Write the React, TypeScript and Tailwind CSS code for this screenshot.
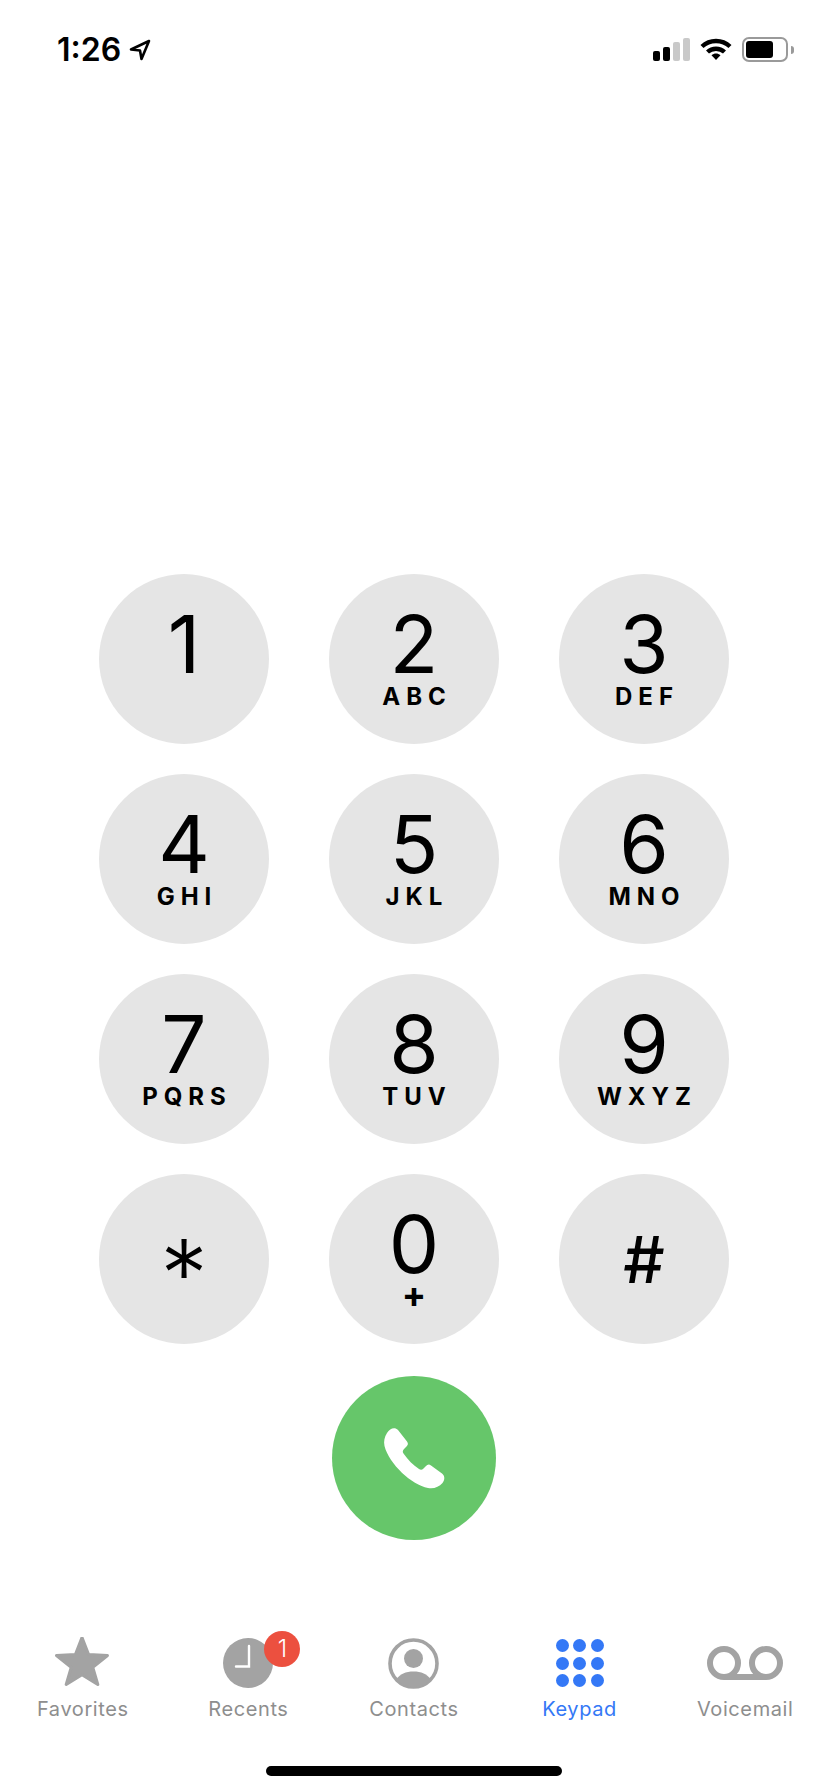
const KEYS = [
  { digit: "1", letters: "" },
  { digit: "2", letters: "ABC" },
  { digit: "3", letters: "DEF" },
  { digit: "4", letters: "GHI" },
  { digit: "5", letters: "JKL" },
  { digit: "6", letters: "MNO" },
  { digit: "7", letters: "PQRS" },
  { digit: "8", letters: "TUV" },
  { digit: "9", letters: "WXYZ" },
];

function StatusBar() {
  return (
    <div className="flex h-[86px] shrink-0 items-start justify-between pl-[57px] pr-[34px] pt-[32px]">
      <div className="flex items-center gap-[8px]">
        <span className="text-[32px] font-semibold leading-[36px] text-black">1:26</span>
        <svg width="22" height="22" viewBox="0 0 22 22" fill="none">
          <path d="M20 2 2 10.5 11 11.5 12.5 20z" stroke="#000" strokeWidth="2.6" strokeLinejoin="round" />
        </svg>
      </div>
      <div className="flex items-center gap-[10px] pt-[5px]">
        <div className="flex items-end gap-[3px]">
          <div className="h-[10px] w-[7px] rounded-[2px] bg-black" />
          <div className="h-[14px] w-[7px] rounded-[2px] bg-black" />
          <div className="h-[19px] w-[7px] rounded-[2px] bg-[#c9c9c9]" />
          <div className="h-[23px] w-[7px] rounded-[2px] bg-[#c9c9c9]" />
        </div>
        <svg width="32" height="23" viewBox="0 0 32 23" fill="none">
          <path d="M2 8.5C9.8 1.2 22.2 1.2 30 8.5" stroke="#000" strokeWidth="4.4" />
          <path d="M7.5 14C12.2 9.7 19.8 9.7 24.5 14" stroke="#000" strokeWidth="4.4" />
          <path d="M11.5 17.2C14.2 15 17.8 15 20.5 17.2L16 22z" fill="#000" />
        </svg>
        <div className="flex items-center gap-[3px]">
          <div className="flex h-[25px] w-[46px] items-center rounded-[7px] border-2 border-[#9a9a9a] p-[2px]">
            <div className="h-full w-[27px] rounded-[3px] bg-black" />
          </div>
          <div className="h-[8px] w-[3px] rounded-r-full bg-[#9a9a9a]" />
        </div>
      </div>
    </div>
  );
}

function Key({ digit, letters }: { digit: string; letters: string }) {
  return (
    <button className="flex h-[170px] w-[170px] flex-col items-center rounded-full bg-[#e5e5e5] pt-[41px] text-black">
      <span className="text-[80px] font-normal leading-[58px]">{digit}</span>
      <span className="mt-[12px] h-[24px] pl-[6px] text-[24px] font-bold leading-[24px] tracking-[6px]">{letters}</span>
    </button>
  );
}

function Keypad() {
  return (
    <div className="grid w-fit grid-cols-3 gap-x-[60px] gap-y-[30px]">
      {KEYS.map((k) => (
        <Key key={k.digit} digit={k.digit} letters={k.letters} />
      ))}
      <button className="flex h-[170px] w-[170px] items-center justify-center rounded-full bg-[#e5e5e5] pt-[28px] text-[95px] font-[350] leading-none text-black">
        *
      </button>
      <button className="flex h-[170px] w-[170px] flex-col items-center rounded-full bg-[#e5e5e5] pt-[41px] text-black">
        <span className="text-[80px] font-normal leading-[58px]">0</span>
        <span className="mt-[9px] text-[36px] font-bold leading-[24px]">+</span>
      </button>
      <button className="flex h-[170px] w-[170px] items-center justify-center rounded-full bg-[#e5e5e5] text-[65px] font-medium leading-none text-black">
        #
      </button>
    </div>
  );
}

function CallButton() {
  return (
    <button className="mt-[32px] flex h-[164px] w-[164px] items-center justify-center rounded-full bg-[#66c66a]">
      <svg width="62" height="62" viewBox="-1 -1 62 62" fill="#fff">
        <path d="M3 5C6 0 11-1 14 2L23 13.5C24.5 15.5 24 17 22.5 18.5L20 21C18.5 22.5 18.5 24 19.5 25.5 24 32 29 37 35 41 36.5 42 38 42 39.5 40.5L42 38C43.5 36.5 45 36 47 37.5L58 45.5C61 48 61 52 58.5 55 55 59 50 61 44 60 28 57 5 36 .5 18-.5 13 .5 9 3 5Z" />
      </svg>
    </button>
  );
}

const GRAY = "#a3a3a3";

function StarIcon() {
  return (
    <svg width="56" height="52" viewBox="1 2 56 52">
      <path
        d="M28 2.5 34.6 19.5 53.5 20.5 38.8 32.3 43.8 49.5 28 39.8 12.2 49.5 17.2 32.3 2.5 20.5 21.4 19.5Z"
        fill={GRAY}
        stroke={GRAY}
        strokeWidth="3"
        strokeLinejoin="round"
      />
    </svg>
  );
}

function ClockIcon() {
  return (
    <div className="relative">
      <svg width="50" height="50" viewBox="0 0 50 50">
        <circle cx="25" cy="25" r="25" fill={GRAY} />
        <path d="M26 8v20.5H13" stroke="#fff" strokeWidth="2.4" fill="none" strokeLinecap="round" />
      </svg>
      <div className="absolute left-[41px] top-[-7px] flex h-[36px] w-[36px] items-center justify-center rounded-full bg-[#ec503f] text-[24px] font-light leading-none text-white">
        1
      </div>
    </div>
  );
}

function ContactIcon() {
  return (
    <svg width="51" height="51" viewBox="0 0 51 51" fill="none">
      <circle cx="25.5" cy="25.5" r="23.5" stroke={GRAY} strokeWidth="3.6" />
      <circle cx="25.5" cy="20.5" r="9.5" fill={GRAY} />
      <path
        d="M8.5 41.5C11.5 36 18 33.5 25.5 33.5 33 33.5 39.5 36 42.5 41.5 38.5 46 32.5 49 25.5 49 18.5 49 12.5 46 8.5 41.5Z"
        fill={GRAY}
      />
    </svg>
  );
}

function KeypadIcon() {
  return (
    <div className="grid grid-cols-3 gap-[4.5px]">
      {Array.from({ length: 9 }).map((_, i) => (
        <div key={i} className="h-[13px] w-[13px] rounded-full bg-[#3478f6]" />
      ))}
    </div>
  );
}

function VoicemailIcon() {
  return (
    <svg width="76" height="34" viewBox="0 0 76 34" fill="none" stroke={GRAY} strokeWidth="6">
      <circle cx="17" cy="17" r="14" />
      <circle cx="59" cy="17" r="14" />
      <path d="M17 31h42" />
    </svg>
  );
}

const TABS = [
  { label: "Favorites", icon: <StarIcon /> },
  { label: "Recents", icon: <ClockIcon /> },
  { label: "Contacts", icon: <ContactIcon /> },
  { label: "Keypad", icon: <KeypadIcon />, active: true },
  { label: "Voicemail", icon: <VoicemailIcon /> },
];

function TabBar() {
  return (
    <div className="mt-auto grid grid-cols-5">
      {TABS.map((t) => (
        <div key={t.label} className="flex flex-col items-center">
          <div className="flex h-[58px] items-center justify-center">{t.icon}</div>
          <span
            className={`mt-[5px] text-[20px] font-normal leading-[24px] tracking-[0.6px] ${
              t.active ? "text-[#3478f6]" : "text-[#8e8e8e]"
            }`}
          >
            {t.label}
          </span>
        </div>
      ))}
    </div>
  );
}

export default function App() {
  return (
    <div className="flex h-[1792px] w-[828px] flex-col bg-white font-['Inter',sans-serif]">
      <StatusBar />
      <div className="flex flex-col items-center pt-[488px]">
        <Keypad />
        <CallButton />
      </div>
      <TabBar />
      <div className="flex justify-center pb-[16px] pt-[45px]">
        <div className="h-[10px] w-[296px] rounded-full bg-black" />
      </div>
    </div>
  );
}
